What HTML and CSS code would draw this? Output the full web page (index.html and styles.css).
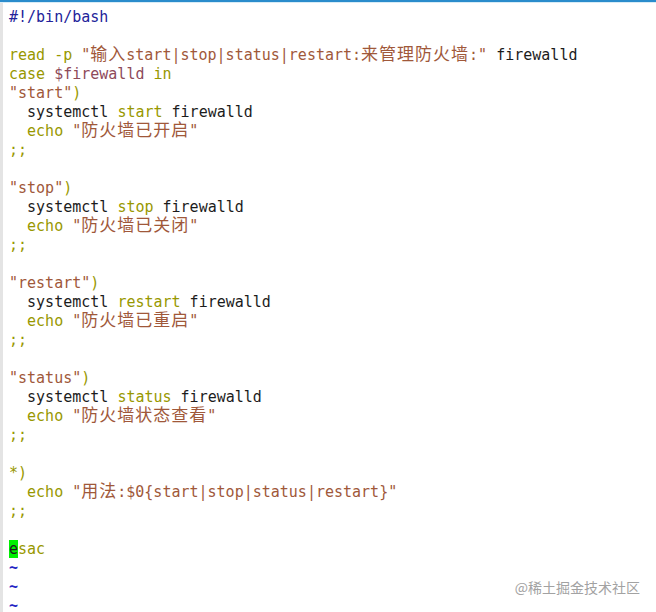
FILE: index.html
```html
<!DOCTYPE html>
<html lang="zh">
<head>
<meta charset="utf-8">
<title>firewalld.sh</title>
<link rel="stylesheet" href="styles.css">
</head>
<body>
<div class="topbar"></div>
<div class="editor">
<div class="ln"><span class="cm">#!/bin/bash</span></div>
<div class="ln"> </div>
<div class="ln"><span class="kw">read</span> <span class="kw">-p</span> <span class="str">"<span class="cjk">输入</span>start|stop|status|restart:<span class="cjk">来管理防火墙</span>:"</span> firewalld</div>
<div class="ln"><span class="kw">case</span> <span class="var">$firewalld</span> <span class="kw">in</span></div>
<div class="ln"><span class="str">"start"</span><span class="kw">)</span></div>
<div class="ln">  systemctl <span class="kw">start</span> firewalld</div>
<div class="ln">  <span class="kw">echo</span> <span class="str">"<span class="cjk">防火墙已开启</span>"</span></div>
<div class="ln"><span class="kw">;;</span></div>
<div class="ln"> </div>
<div class="ln"><span class="str">"stop"</span><span class="kw">)</span></div>
<div class="ln">  systemctl <span class="kw">stop</span> firewalld</div>
<div class="ln">  <span class="kw">echo</span> <span class="str">"<span class="cjk">防火墙已关闭</span>"</span></div>
<div class="ln"><span class="kw">;;</span></div>
<div class="ln"> </div>
<div class="ln"><span class="str">"restart"</span><span class="kw">)</span></div>
<div class="ln">  systemctl <span class="kw">restart</span> firewalld</div>
<div class="ln">  <span class="kw">echo</span> <span class="str">"<span class="cjk">防火墙已重启</span>"</span></div>
<div class="ln"><span class="kw">;;</span></div>
<div class="ln"> </div>
<div class="ln"><span class="str">"status"</span><span class="kw">)</span></div>
<div class="ln">  systemctl <span class="kw">status</span> firewalld</div>
<div class="ln">  <span class="kw">echo</span> <span class="str">"<span class="cjk">防火墙状态查看</span>"</span></div>
<div class="ln"><span class="kw">;;</span></div>
<div class="ln"> </div>
<div class="ln"><span class="kw">*)</span></div>
<div class="ln">  <span class="kw">echo</span> <span class="str">"<span class="cjk">用法</span>:$0{start|stop|status|restart}"</span></div>
<div class="ln"><span class="kw">;;</span></div>
<div class="ln"> </div>
<div class="ln"><span class="kw"><span class="cursor">e</span>sac</span></div>
<div class="ln"><span class="tilde">~</span></div>
<div class="ln"><span class="tilde">~</span></div>
<div class="ln"><span class="tilde">~</span></div>
</div>
<div class="watermark">@稀土掘金技术社区</div>
</body>
</html>
```
FILE: styles.css
```css
html, body {
  margin: 0;
  padding: 0;
  background: #ffffff;
  width: 656px;
  height: 612px;
  overflow: hidden;
  position: relative;
}

.topbar {
  height: 2px;
  background: #2a8ccc;
  border-bottom: 1px solid #d8ecf6;
}

.editor {
  border-left: 3px solid #e4e4e4;
  padding: 5px 0 0 6px;
  height: 620px;
  font-family: "DejaVu Sans Mono", "Noto Sans CJK SC", monospace;
  font-size: 15px;
  color: #1c1c1c;
}

.ln {
  height: 19px;
  line-height: 19px;
  white-space: pre;
}

.cjk {
  font-family: "Noto Sans CJK SC", sans-serif;
  font-size: 17px;
  letter-spacing: 1px;
  line-height: 14px;
}

.cm { color: #23239a; }
.kw { color: #989800; }
.str { color: #a0583a; }
.var { color: #8e4a5a; }
.tilde { color: #2424c4; font-weight: bold; }

.cursor {
  background: #00f000;
  color: #1c1c1c;
}

.watermark {
  position: absolute;
  right: 16px;
  bottom: 16px;
  font-family: "Noto Sans CJK SC", sans-serif;
  font-size: 14px;
  color: #a2a2a2;
  line-height: 18px;
}
```
